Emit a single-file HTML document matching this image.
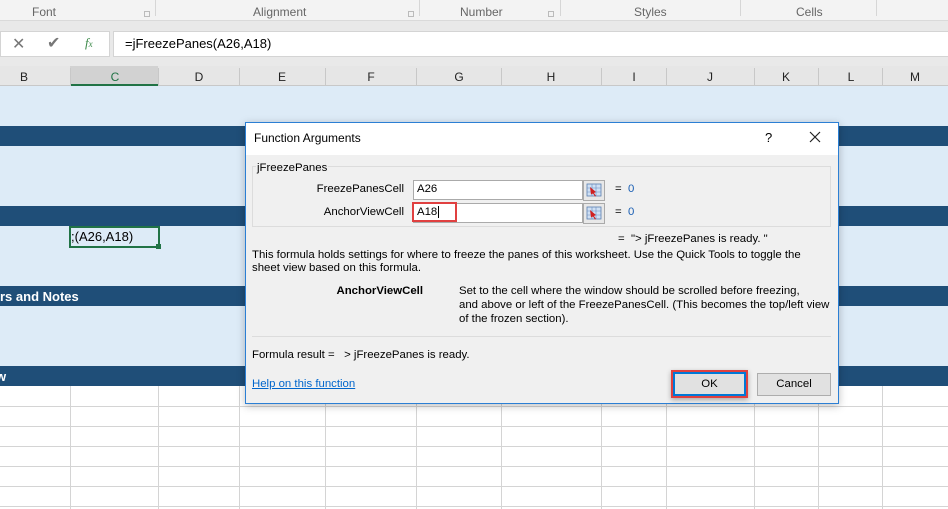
<!DOCTYPE html>
<html><head><meta charset="utf-8"><style>
*{margin:0;padding:0;box-sizing:border-box}
body{width:948px;height:509px;overflow:hidden;position:relative;background:#fff;font-family:"Liberation Sans",sans-serif;font-size:12px;color:#000}
.a{position:absolute}
.t{position:absolute;white-space:nowrap}
.d{font-size:11.4px}
</style></head><body>
<div class="a" style="left:0;top:0;width:948px;height:21px;background:#f3f3f3;border-bottom:1px solid #dadada"></div>
<div class="a" style="left:155px;top:0;width:1px;height:16px;background:#d6d6d6"></div>
<div class="a" style="left:419px;top:0;width:1px;height:16px;background:#d6d6d6"></div>
<div class="a" style="left:560px;top:0;width:1px;height:16px;background:#d6d6d6"></div>
<div class="a" style="left:740px;top:0;width:1px;height:16px;background:#d6d6d6"></div>
<div class="a" style="left:876px;top:0;width:1px;height:16px;background:#d6d6d6"></div>
<div class="t" style="left:32px;top:5px;color:#666">Font</div>
<div class="t" style="left:253px;top:5px;color:#666">Alignment</div>
<div class="t" style="left:460px;top:5px;color:#666">Number</div>
<div class="t" style="left:634px;top:5px;color:#666">Styles</div>
<div class="t" style="left:796px;top:5px;color:#666">Cells</div>
<div class="a" style="left:144px;top:11px;width:6px;height:6px;border:1px solid #bbb"></div>
<div class="a" style="left:408px;top:11px;width:6px;height:6px;border:1px solid #bbb"></div>
<div class="a" style="left:548px;top:11px;width:6px;height:6px;border:1px solid #bbb"></div>
<div class="a" style="left:0;top:21px;width:948px;height:45px;background:#e9e9e9"></div>
<div class="a" style="left:0;top:31px;width:110px;height:26px;background:#fff;border:1px solid #d4d4d4"></div>
<div class="t" style="left:12px;top:34px;font-size:16px;color:#777">✕</div>
<div class="t" style="left:47px;top:33px;font-size:16px;color:#777">✔</div>
<div class="t" style="left:85px;top:35px;font-family:'Liberation Serif',serif;font-style:italic;color:#3c8a4a;font-size:13px">f<span style="font-size:9px">x</span></div>
<div class="a" style="left:113px;top:31px;width:835px;height:26px;background:#fff;border:1px solid #d4d4d4;border-right:none"></div>
<div class="t" style="left:125px;top:36px;font-size:13px">=jFreezePanes(A26,A18)</div>
<div class="a" style="left:0;top:66px;width:948px;height:20px;background:#e6e6e6;border-bottom:1px solid #c8c8c8"></div>
<div class="a" style="left:70px;top:66px;width:88px;height:20px;background:#d2d2d2;border-bottom:2px solid #217346"></div>
<div class="a" style="left:0;top:86px;width:948px;height:300px;background:#ddebf7"></div>
<div class="a" style="left:0;top:126px;width:948px;height:20px;background:#1f4e78"></div>
<div class="a" style="left:0;top:206px;width:948px;height:20px;background:#1f4e78"></div>
<div class="a" style="left:0;top:286px;width:948px;height:20px;background:#1f4e78"></div>
<div class="a" style="left:0;top:366px;width:948px;height:20px;background:#1f4e78"></div>
<div class="t" style="left:0;top:289px;color:#fff;font-weight:bold;font-size:13px">rs and Notes</div>
<div class="t" style="left:-4px;top:369px;color:#fff;font-weight:bold;font-size:13px">w</div>
<div class="a" style="left:69px;top:226px;width:91px;height:22px;border:2px solid #217346"></div>
<div class="a" style="left:156px;top:244px;width:5px;height:5px;background:#217346"></div>
<div class="t" style="left:71px;top:229px;font-size:13px">;(A26,A18)</div>
<svg class="a" style="left:0;top:0" width="948" height="509">
<g fill="#222" font-family="Liberation Sans" font-size="12" text-anchor="middle">
<text x="24" y="81">B</text><text x="115" y="81" fill="#217346">C</text><text x="199" y="81">D</text><text x="282" y="81">E</text><text x="371" y="81">F</text><text x="459" y="81">G</text><text x="551" y="81">H</text><text x="634" y="81">I</text><text x="710" y="81">J</text><text x="786" y="81">K</text><text x="851" y="81">L</text><text x="915" y="81">M</text>
</g>
<g stroke="#c8c8c8">
<line x1="70.5" y1="68" x2="70.5" y2="86"/><line x1="158.5" y1="68" x2="158.5" y2="86"/><line x1="239.5" y1="68" x2="239.5" y2="86"/><line x1="325.5" y1="68" x2="325.5" y2="86"/><line x1="416.5" y1="68" x2="416.5" y2="86"/><line x1="501.5" y1="68" x2="501.5" y2="86"/><line x1="601.5" y1="68" x2="601.5" y2="86"/><line x1="666.5" y1="68" x2="666.5" y2="86"/><line x1="754.5" y1="68" x2="754.5" y2="86"/><line x1="818.5" y1="68" x2="818.5" y2="86"/><line x1="882.5" y1="68" x2="882.5" y2="86"/>
</g>
<g stroke="#d4d4d4">
<line x1="70.5" y1="386" x2="70.5" y2="509"/><line x1="158.5" y1="386" x2="158.5" y2="509"/><line x1="239.5" y1="386" x2="239.5" y2="509"/><line x1="325.5" y1="386" x2="325.5" y2="509"/><line x1="416.5" y1="386" x2="416.5" y2="509"/><line x1="501.5" y1="386" x2="501.5" y2="509"/><line x1="601.5" y1="386" x2="601.5" y2="509"/><line x1="666.5" y1="386" x2="666.5" y2="509"/><line x1="754.5" y1="386" x2="754.5" y2="509"/><line x1="818.5" y1="386" x2="818.5" y2="509"/><line x1="882.5" y1="386" x2="882.5" y2="509"/>
<line x1="0" y1="406.5" x2="948" y2="406.5"/><line x1="0" y1="426.5" x2="948" y2="426.5"/><line x1="0" y1="446.5" x2="948" y2="446.5"/><line x1="0" y1="466.5" x2="948" y2="466.5"/><line x1="0" y1="486.5" x2="948" y2="486.5"/><line x1="0" y1="506.5" x2="948" y2="506.5"/>
</g>
</svg>
<div class="a" style="left:245px;top:122px;width:594px;height:282px;background:#f0f0f0;border:1px solid #2b7fd4;box-shadow:0 2px 8px rgba(0,0,0,.25)"></div>
<div class="a" style="left:246px;top:123px;width:592px;height:32px;background:#fff"></div>
<div class="t" style="left:254px;top:131px">Function Arguments</div>
<div class="t" style="left:765px;top:130px;font-size:13px">?</div>
<svg class="a" style="left:809px;top:131px" width="12" height="12"><path d="M1 1L11 11M11 1L1 11" stroke="#222" stroke-width="1.2"/></svg>
<div class="a" style="left:252px;top:166px;width:579px;height:61px;border:1px solid #dcdcdc"></div>
<div class="t d" style="left:256px;top:162px;background:#f0f0f0;padding:0 1px">jFreezePanes</div>
<div class="t d" style="left:300px;top:183px;width:104px;text-align:right">FreezePanesCell</div>
<div class="t d" style="left:300px;top:206px;width:104px;text-align:right">AnchorViewCell</div>
<div class="a" style="left:413px;top:180px;width:170px;height:20px;background:#fff;border:1px solid #aaa"></div>
<div class="a" style="left:413px;top:203px;width:170px;height:20px;background:#fff;border:1px solid #aaa"></div>
<div class="t d" style="left:417px;top:183px">A26</div>
<div class="t d" style="left:417px;top:206px">A18<span style="border-left:1px solid #000;margin-left:1px"></span></div>
<div class="a" style="left:412px;top:202px;width:45px;height:20px;border:2px solid #e04040"></div>
<svg class="a" style="left:583px;top:180px" width="22" height="44">
<g>
<rect x="0.5" y="0.5" width="21" height="20" fill="#e8e8e8" stroke="#aaa"/>
<rect x="4" y="4" width="14" height="12" fill="#cfe0f4" stroke="#5a7fb0" stroke-width=".8"/>
<path d="M4 8h14M4 12h14M9 4v12M13 4v12" stroke="#6b8cc0" stroke-width=".6"/>
<path d="M7 7l6 5-2 1 2 3-1 .5-2-3-2 1z" fill="#d02020"/>
<rect x="0.5" y="23.5" width="21" height="20" fill="#e8e8e8" stroke="#aaa"/>
<rect x="4" y="27" width="14" height="12" fill="#cfe0f4" stroke="#5a7fb0" stroke-width=".8"/>
<path d="M4 31h14M4 35h14M9 27v12M13 27v12" stroke="#6b8cc0" stroke-width=".6"/>
<path d="M7 30l6 5-2 1 2 3-1 .5-2-3-2 1z" fill="#d02020"/>
</g></svg>
<div class="t d" style="left:615px;top:183px">= &nbsp;<span style="color:#1a5fb4">0</span></div>
<div class="t d" style="left:615px;top:206px">= &nbsp;<span style="color:#1a5fb4">0</span></div>
<div class="t d" style="left:618px;top:233px">= &nbsp;"&gt; jFreezePanes is ready. "</div>
<div class="t d" style="left:252px;top:249px">This formula holds settings for where to freeze the panes of this worksheet. Use the Quick Tools to toggle the</div>
<div class="t d" style="left:252px;top:262px">sheet view based on this formula.</div>
<div class="t d" style="left:300px;top:285px;width:123px;text-align:right;font-weight:bold">AnchorViewCell</div>
<div class="t d" style="left:459px;top:285px">Set to the cell where the window should be scrolled before freezing,</div>
<div class="t d" style="left:459px;top:299px">and above or left of the FreezePanesCell. (This becomes the top/left view</div>
<div class="t d" style="left:459px;top:313px">of the frozen section).</div>
<div class="a" style="left:252px;top:336px;width:579px;height:1px;background:#dcdcdc"></div>
<div class="t d" style="left:252px;top:349px">Formula result = &nbsp;&nbsp;&gt; jFreezePanes is ready.</div>
<div class="t d" style="left:252px;top:378px;color:#0066cc;text-decoration:underline">Help on this function</div>
<div class="a" style="left:671px;top:370px;width:77px;height:28px;border:2px solid #e04040;box-shadow:0 2px 5px rgba(0,0,0,.3)"></div>
<div class="a d" style="left:673px;top:372px;width:73px;height:24px;background:#e1e1e1;border:2px solid #0078d7;text-align:center;line-height:20px">OK</div>
<div class="a d" style="left:757px;top:373px;width:74px;height:23px;background:#e1e1e1;border:1px solid #adadad;text-align:center;line-height:21px">Cancel</div>
</body></html>
